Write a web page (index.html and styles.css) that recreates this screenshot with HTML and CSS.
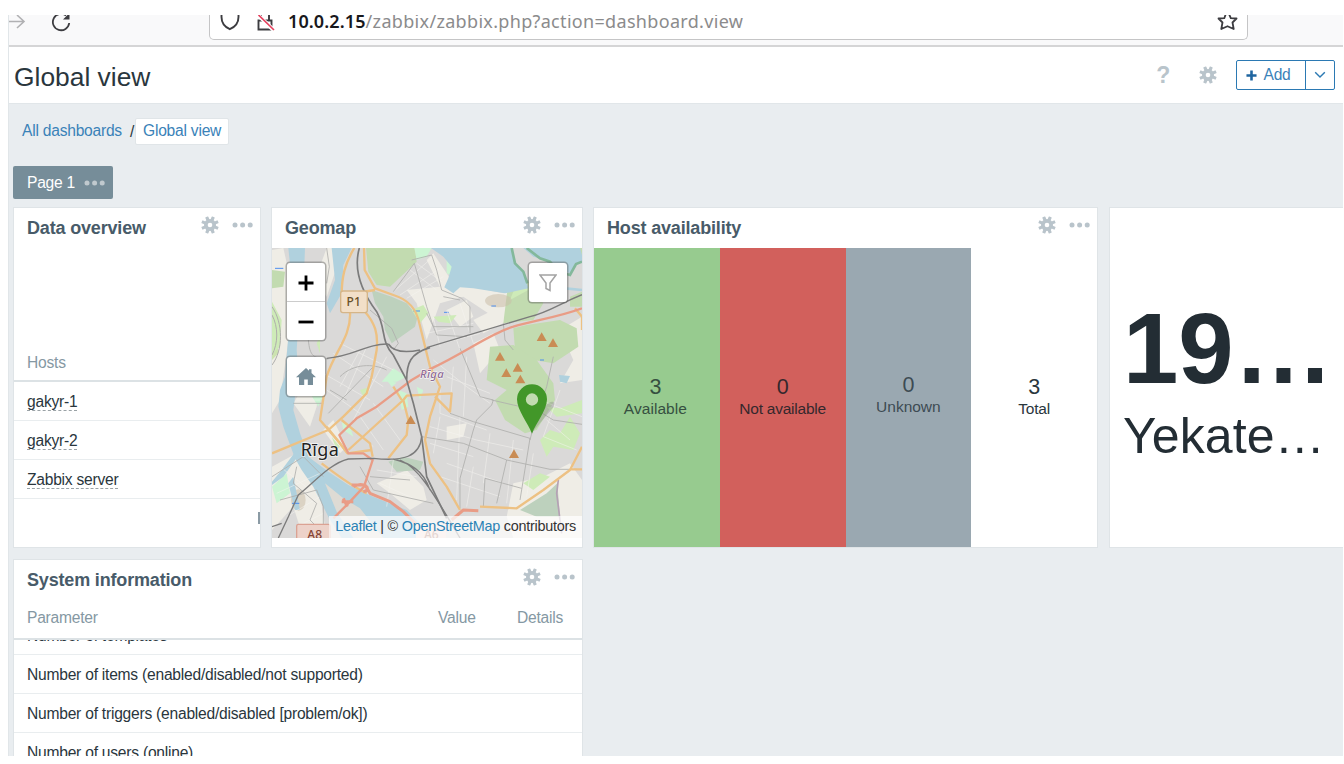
FILE: index.html
```html
<!DOCTYPE html>
<html lang="en">
<head>
<meta charset="utf-8">
<title>Global view</title>
<link rel="stylesheet" href="styles.css">
</head>
<body>
<svg class="defs" width="0" height="0">
  <symbol id="gear" viewBox="-9 -9 18 18">
    <g fill="#b9c4cb">
      <rect x="-1.6" y="-8.8" width="3.2" height="17.6" rx=".6" transform="rotate(22.5)"/>
      <rect x="-1.6" y="-8.8" width="3.2" height="17.6" rx=".6" transform="rotate(67.5)"/>
      <rect x="-1.6" y="-8.8" width="3.2" height="17.6" rx=".6" transform="rotate(112.5)"/>
      <rect x="-1.6" y="-8.8" width="3.2" height="17.6" rx=".6" transform="rotate(157.5)"/>
      <circle r="6"/>
    </g>
    <circle r="2.300" fill="#fff"/>
  </symbol>
  <symbol id="dots" viewBox="0 0 22 6">
    <circle cx="3" cy="3" r="2.500"/><circle cx="10.600" cy="3" r="2.500"/><circle cx="18.200" cy="3" r="2.500"/>
  </symbol>
</svg>
<div class="screen">
  <div class="browser">
    <svg class="nav" width="70" height="30" viewBox="0 0 70 30" fill="none">
      <path d="M0 6.500H15M9 0l7 6.500-7 6.500" stroke="#b1b1b3" stroke-width="1.600"/>
      <path d="M58 0.500A8.200 8.200 0 1 0 61.200 8" stroke="#3c3c40" stroke-width="1.800"/>
      <path d="M55 4.500h6.500V-2z" fill="#3c3c40"/>
    </svg>
    <div class="address">
      <svg width="70" height="25" viewBox="0 0 70 25" fill="none">
        <path d="M11.500-2V2C11.500 8 15 12 19.800 14.200C25 12 28.500 8 28.500 2V-2" stroke="#3c3c40" stroke-width="1.900"/>
        <path d="M48.500 5.500h13v9h-13zM51 5V0M59 5V0" stroke="#3c3c40" stroke-width="1.900"/>
        <path d="M48 0L63.500 15" stroke="#fff" stroke-width="4"/>
        <path d="M48.500 0L64 15" stroke="#e5405e" stroke-width="1.700"/>
      </svg>
      <span class="url"><span class="host">10.0.2.15</span>/zabbix/zabbix.php?action=dashboard.view</span>
      <svg class="star" width="22" height="25" viewBox="0 0 22 25" fill="none"><path d="M8.800-1L7.300 3.200L1.500 3.500L5.500 7.500L4.300 14L10.500 11.200L16.700 14L15.500 7.500L19.500 3.500L13.800 3.200L12-1" stroke="#3c3c40" stroke-width="1.800" stroke-linejoin="round"/></svg>
    </div>
  </div>
  <header class="header">
    <h1>Global view</h1>
    <div class="actions">
      <span class="help">?</span>
      <svg width="18" height="18"><use href="#gear"/></svg>
      <div class="split">
        <button class="add"><svg width="11" height="11" viewBox="0 0 12 12"><path d="M6 .500v11M.500 6h11" stroke="#1f65a0" stroke-width="2.800"/></svg>Add</button>
        <button class="more"><svg width="12" height="8" viewBox="0 0 12 8"><path d="M1.200 1.200L6 6L10.800 1.200" fill="none" stroke="#2b79b3" stroke-width="1.400"/></svg></button>
      </div>
    </div>
  </header>
  <nav class="crumbs"><a>All dashboards</a><span class="slash">/</span><a class="current">Global view</a></nav>
  <div class="tabs"><div class="tab">Page 1<svg width="22" height="6" fill="#c0c9ce"><use href="#dots"/></svg></div></div>

  <main class="grid">
    <section class="card overview">
      <div class="head"><h2>Data overview</h2><svg width="18" height="18"><use href="#gear"/></svg><svg class="dots" width="22" height="6"><use href="#dots"/></svg></div>
      <div class="hosts-head">Hosts</div>
      <div class="row"><span class="link">gakyr-1</span></div>
      <div class="row"><span class="link">gakyr-2</span></div>
      <div class="row"><span class="link">Zabbix server</span></div>
      <div class="clipped"></div>
    </section>

    <section class="card geomap">
      <div class="head"><h2>Geomap</h2><svg width="18" height="18"><use href="#gear"/></svg><svg class="dots" width="22" height="6"><use href="#dots"/></svg></div>
      <div class="map">
        <svg width="310" height="290" viewBox="36 144 930 870" fill="none">
          <rect x="36" y="144" width="930" height="870" fill="#dad9d8"/>
          <!-- open ground -->
          <g fill="#efede6">
            <path d="M36 150L70 144L105 300L84 430L60 600L36 640zM200 144H250L200 290L165 240z"/>
            <path d="M520 160L580 250L730 280L800 260L830 330L730 370L610 290L540 310L500 420L470 310L440 270L540 260L500 180z"/>
            <path d="M100 610L130 560L180 520L170 620L150 680zM560 330L620 300L640 350L600 380zM640 360L700 330L730 370L670 400z"/>
            <path d="M900 390L966 350V540L900 550L940 480zM640 430L700 400L720 450L660 520z"/>
            <path d="M36 800L110 760L180 880L200 1014H130L100 920L36 990zM350 850L440 810L490 860L500 900L450 930L390 880z"/>
            <path d="M760 850L850 830L930 790L966 840V1014H760L740 950zM190 690L220 660L260 740L240 760zM560 680L620 670L610 710L560 720z"/>
          </g>
          <!-- parks and woods -->
          <g fill="#c2dbb0">
            <path d="M318 144H465L470 185L390 260L350 255L325 215z"/>
            <path d="M760 385L800 375L900 360L950 385L955 440L880 490L820 480L765 450z"/>
            <path d="M690 440L760 435L830 480L880 550L885 600L830 690L795 700L735 660L705 600L740 570L680 540z"/>
            <path d="M745 245L805 240L850 310L820 360L730 370z"/>
            <path d="M36 210L75 215L70 260L36 265zM930 290L966 275V320L930 320zM820 144H966V170L890 160L850 180z"/>
          </g>
          <g fill="#bdd1bd">
            <path d="M335 270L395 290L440 310L473 350L465 380L395 430L375 390L370 350L345 310z"/>
            <path d="M780 930L860 880L892 850L900 950L830 950zM385 785L430 770L490 785L480 810L410 815z"/>
            <path d="M36 390L50 400L55 460L36 480z" fill="#cce3b0"/>
          </g>
          <g fill="#ceebb8">
            <path d="M455 330L490 315L505 340L480 370zM770 250L800 240L805 270L750 300zM36 305L65 360L60 440L36 460z"/>
            <path d="M840 720L870 690L900 700L930 650L960 700L940 750L880 740L860 770zM860 620L900 625L966 600V640L890 650zM790 850L840 820L870 830L820 870zM520 350L590 345L570 370L535 365z"/>
            <path d="M170 430L180 410V460zM300 570L330 560L310 590zM215 710L240 740L230 750z"/>
          </g>
          <g fill="#ccf4d3">
            <path d="M463 144H515L500 170L470 180zM400 505L440 530L410 545L365 545zM380 540L410 548L395 560zM415 570L440 580L445 620L425 630zM245 665L270 680L280 710L250 690zM36 860L80 820L90 880L50 910zM150 580L180 540L188 590L175 620z"/>
            <path d="M560 180L580 190L578 230L560 220zM470 560L490 570L480 600zM275 860L320 900L310 930L280 890zM180 850L210 870L190 880z"/>
          </g>
          <g fill="#cbbfa9" opacity=".55"><ellipse cx="715" cy="302" rx="40" ry="20"/><ellipse cx="115" cy="900" rx="22" ry="32"/></g>
          <!-- water -->
          <g fill="#b0d1de">
            <path d="M513 144H755L765 190L790 215L805 265L735 280L640 265L600 262L580 280L553 262L565 235L575 200L550 170z"/>
            <path d="M790 144H960L966 165V185L945 190L935 220L880 210L855 180L820 170z"/>
            <path d="M85 144H135L130 280L115 370L110 450L115 520L95 560L105 590L100 630L120 700L145 770L205 815L265 855L340 890L440 930L480 970L500 1014H245L205 950L160 860L125 810L105 775L70 680L55 620L60 570L75 530L84 420L100 290z"/>
            <path d="M215 144H275L250 195L245 280L210 340L200 310L225 240zM120 760L70 830L36 855V845L65 810L110 750zM100 830L120 930L105 930L85 850z"/>
            <path d="M897 525L930 528L920 550L900 545z"/>
          </g>
          <path d="M195 850L250 895L300 925L370 1014H280L230 935z" fill="#dedbd4"/>
          <path d="M755 144L765 190L790 215L802 250M800 144L840 175L870 185L895 215L930 225L948 192L966 185" stroke="#83b89b" stroke-width="8"/>
          <path d="M915 265L966 270" stroke="#b0d1de" stroke-width="8"/>
          <path d="M45 205H70M460 333H480M105 340H128M694 318H708M840 480H852M96 910H118M552 337H566" stroke="#4d8ff0" stroke-width="3"/>
          <!-- minor streets -->
          <g stroke="#f7f5f2" stroke-width="2.500" opacity=".6">
            <path d="M400 275L520 170M420 285L540 205M440 295L550 230M450 210L530 270M470 190L545 245M500 400L640 370M510 440L660 400M520 350L540 440M560 330L600 450M600 310L640 430M520 480L620 560L690 610"/>
            <path d="M540 560V640L680 690M560 530L690 580M580 500L570 620M620 470L610 650M510 680L650 720L790 750M510 730L640 770M540 650L520 760M600 650L590 900M560 790L730 850M540 830L720 890M690 700L670 850M760 720L740 910M820 760L800 890M640 800L620 920"/>
            <path d="M190 520L330 600M200 570L300 640M220 460L370 560M240 430L400 510M320 440L250 600M300 450L240 560M380 470L280 660M340 610L420 720M300 650L370 750M280 690L340 740M350 810L470 830M360 850L470 900M400 780L380 920M110 600H180M110 570L190 560M60 800L150 870M50 880L180 820M80 950L180 890M110 980L190 940M840 600L966 650M850 710L950 750M860 660L930 720M900 570L850 710"/>
          </g>
          <!-- local streets -->
          <g stroke="#afaeac" stroke-width="2.500">
            <path d="M463 190L500 320L520 380H640M463 190L400 275M455 180L515 165L530 210L545 270L605 295L630 320V400M500 340L520 380L530 405L620 410M550 290L600 300M330 330L395 385L415 430L400 450"/>
            <path d="M200 144L208 200L200 250M145 420C150 470 160 475 205 477M600 445L660 590L700 600L695 615L650 660L640 690L600 835V925M730 370L735 420L760 450M570 640L640 665L810 715L780 900M695 600L760 615L830 630L880 660L966 673M485 710L610 730L740 780L870 808L950 808M740 780L710 910M675 835L670 920M675 835L785 865M810 720L820 680L860 560L880 470"/>
            <path d="M205 640L340 500M260 600L210 570M100 610H190M240 530C280 490 340 490 380 510M36 830L130 770L190 830M110 800L100 850L170 910L150 960L190 1000M60 900L170 870L190 920V990M330 830L450 840M300 800L340 870L520 910"/>
            <path d="M36 320C70 370 70 450 36 495M36 345C55 380 55 430 36 465" stroke-width="3"/>
            <path d="M895 840L890 880L905 1000" stroke="#b5a1b5" stroke-width="5"/>
          </g>
          <!-- main roads -->
          <g stroke="#edc183" stroke-width="7" stroke-linejoin="round">
            <path d="M283 144C255 190 245 230 245 285L270 335C275 410 220 460 200 530L180 660L240 730L262 760L335 750"/>
            <path d="M312 144L314 210L345 265L400 285C450 300 470 330 478 370L510 500L540 560L510 650L495 720L510 790L560 860L600 930"/>
            <path d="M345 270L250 285M315 335C345 370 355 400 350 450L335 530L320 580L250 650L205 690L36 760M430 600L265 750M430 600L440 587L575 580L570 635L525 590M425 600L400 560M430 600L445 660L440 705L385 775M245 660L330 730L338 770M200 680L260 755M185 790C250 840 290 865 320 880M660 920L770 925L850 870L930 810L966 740M930 808H966M945 325L966 350V390"/>
          </g>
          <g stroke="#e99c86" stroke-width="7" stroke-linejoin="round">
            <path d="M966 325C900 350 830 360 760 380C700 395 620 455 515 505L455 540L350 620L290 655L238 705L265 760L310 760L338 780L312 860L265 910L220 955"/>
            <path d="M275 855L315 855L330 880L390 905L430 935L480 985M245 905H280M250 895L262 920M575 960L610 930L655 932M280 860C310 840 340 870 310 875" stroke-width="9"/>
          </g>
          <!-- railways -->
          <g stroke="#7b7b7b" stroke-width="5">
            <path d="M298 144C275 225 320 295 350 335C380 390 360 420 400 465L440 540L460 610L485 710L500 830L560 955M385 432C400 455 430 460 480 450M440 540C440 490 450 460 510 443" />
            <path d="M966 284C900 310 870 335 810 350L500 443M200 475C280 470 320 430 385 432" stroke-width="4"/>
            <path d="M485 710C480 770 430 785 340 775L265 777C210 790 160 850 115 885L85 950L55 1014M400 777C450 790 490 810 510 870M420 780C470 800 510 860 600 1014M36 980L65 970" stroke-width="4"/>
          </g>
          <!-- peaks -->
          <g fill="#c98c54">
            <path id="peak" d="M845 397l15 26h-30z"/><use href="#peak" x="34" y="18"/><use href="#peak" x="-125" y="59"/><use href="#peak" x="-72" y="92"/><use href="#peak" x="-106" y="108"/><use href="#peak" x="-64" y="127"/><use href="#peak" x="-393" y="249"/><use href="#peak" x="-83" y="351"/>
          </g>
          <g class="shield">
            <rect x="242" y="273" width="80" height="65" rx="7" fill="#f2dfc8" stroke="#d5b588" stroke-width="4"/>
            <text x="281" y="318" font-size="36" fill="#685027">P1</text>
            <rect x="110" y="973" width="100" height="60" rx="5" fill="#edd2c9" stroke="#dba293" stroke-width="4"/>
            <text x="164" y="1018" font-size="36" fill="#834334">A8</text>
            <rect x="468" y="971" width="90" height="60" rx="5" fill="#efd9d2"/>
            <text x="514" y="1018" font-size="36" fill="#9c6b5f">A6</text>
          </g>
          <text class="station" x="516" y="533">Rīga</text>
          <text class="city" x="180" y="768">Rīga</text>
          <path d="M816 698L880 622C890 600 870 600 855 620z" fill="#777" opacity=".3"/>
          <path d="M816 701C804 670 771 630 771 598A45 45 0 0 1 861 598C861 630 828 670 816 701zM816 580A18 18 0 1 0 816 617A18 18 0 1 0 816 580z" fill="#429729" fill-rule="evenodd"/>
        </svg>
        <div class="zoom"><div class="zoom-btn"><svg width="16" height="16"><path d="M8 .500v15M.500 8h15" stroke="#000" stroke-width="2.800"/></svg></div><div class="zoom-btn"><svg width="16" height="16"><path d="M.500 8h15" stroke="#000" stroke-width="2.800"/></svg></div></div>
        <div class="tool home"><svg width="20" height="18" viewBox="0 0 20 18"><path d="M10 0L0 9.200H3V17H8.200V11.500H11.800V17H17V9.200H20L15.500 5V1.200H13V2.800z" fill="#768d99"/></svg></div>
        <div class="tool filter"><svg width="18" height="18" viewBox="0 0 18 18"><path d="M1 1H17L11 9V16.500L7 14.500V9z" fill="none" stroke="#a3a3a3" stroke-width="1.500"/></svg></div>
        <div class="credit"><a>Leaflet</a> | © <a>OpenStreetMap</a> contributors</div>
      </div>
    </section>

    <section class="card hostav">
      <div class="head"><h2>Host availability</h2><svg width="18" height="18"><use href="#gear"/></svg><svg class="dots" width="22" height="6"><use href="#dots"/></svg></div>
      <div class="cells">
        <div class="cell up"><b>3</b><span>Available</span></div>
        <div class="cell down"><b>0</b><span>Not available</span></div>
        <div class="cell unknown"><b>0</b><span>Unknown</span></div>
        <div class="cell"><b>3</b><span>Total</span></div>
      </div>
    </section>

    <section class="card clock">
      <div class="time">19…</div>
      <div class="zone">Yekate…</div>
    </section>

    <section class="card sysinfo">
      <div class="head"><h2>System information</h2><svg width="18" height="18"><use href="#gear"/></svg><svg class="dots" width="22" height="6"><use href="#dots"/></svg></div>
      <div class="cols"><span>Parameter</span><span>Value</span><span>Details</span></div>
      <div class="scroller">
        <div class="row">Number of templates</div>
        <div class="row">Number of items (enabled/disabled/not supported)</div>
        <div class="row">Number of triggers (enabled/disabled [problem/ok])</div>
        <div class="row">Number of users (online)</div>
      </div>
    </section>
  </main>
</div>
</body>
</html>
```
FILE: styles.css
```css
* { box-sizing: border-box; }
body { margin: 0; height: 764px; overflow: hidden; background: #fff; font-family: "Liberation Sans", Arial, sans-serif; font-size: 15.600px; letter-spacing: -.230px; line-height: 18px; color: #2a363d; }
svg { display: block; flex: none; }
.defs { position: absolute; }
h1, h2 { margin: 0; }
a { color: #3a82b8; }
button { font: inherit; letter-spacing: inherit; border: 0; background: none; padding: 0; color: #3a82b8; }

.screen { margin: 15px 0 0 8px; width: 1335px; height: 741px; overflow: hidden; background: #e9edf0; border-left: 1px solid #e1e6e9; }

.browser { height: 32px; margin-left: -1px; display: flex; background: #f9f9fa; border-bottom: 2px solid #d5d5d6; overflow: hidden; }
.nav { margin-right: 131px; }
.address { height: 25px; width: 1039px; display: flex; background: #fff; border: solid #c5c5c6; border-width: 0 1px 1px; border-radius: 0 0 5px 5px; }
.url { margin-left: 8px; margin-top: -6px; font: 18px/24px "Noto Sans", sans-serif; letter-spacing: .320px; color: #8b8b8c; white-space: nowrap; }
.host { color: #18181c; font-weight: 600; letter-spacing: .100px; }
.star { margin: 0 8px 0 auto; }

.header { height: 57px; padding: 0 8px 0 5px; display: flex; align-items: center; justify-content: space-between; background: #fff; border-bottom: 1px solid #e1e6e9; }
h1 { font-size: 26.400px; line-height: 32px; font-weight: 400; letter-spacing: 0; padding-top: 3px; }
.actions { display: flex; align-items: center; }
.help { font-size: 23px; font-weight: 700; color: #b9c4cb; margin-right: 29px; }
.split { margin-left: 19px; display: flex; height: 30px; border: 1.500px solid #2b79b3; border-radius: 2px; }
.add { width: 69px; padding-right: 5px; display: flex; align-items: center; justify-content: center; gap: 6px; border-right: 1px solid #2b79b3; }
.more { width: 28px; display: flex; align-items: center; justify-content: center; }

.crumbs { height: 54px; padding: 0 0 0 13px; display: flex; align-items: center; }
.slash { margin: 1px 1px 0 8px; }
.current { height: 27px; padding: 3px 7px; background: #fff; border: 1px solid #e0e5e8; border-radius: 2px; }
.tabs { height: 49px; padding: 8px 0 0 4px; }
.tab { width: 100px; height: 33px; padding: 0 0 0 14px; display: flex; align-items: center; gap: 9px; background: #768d99; border-radius: 2px; color: #fff; }

.grid { width: 1340px; padding-left: 4px; display: grid; grid-template-columns: 248px 312px 505px 240px; grid-template-rows: 341px 340px; row-gap: 11px; column-gap: 10px; }
.card { background: #fff; border: 1px solid #dfe4e7; overflow: hidden; min-width: 0; }
.head { height: 40px; padding: 0 6px 6px 13px; display: flex; align-items: center; }
h2 { font-size: 18px; letter-spacing: -.170px; line-height: 20px; font-weight: 700; color: #485b69; margin: 6px auto 0 0; }
.dots { margin-left: 13px; fill: #b9c4cb; }

.hosts-head { height: 134px; padding: 0 13px 8px; display: flex; align-items: flex-end; color: #8598a3; border-bottom: 2px solid #dce2e5; }
.row { height: 39px; padding: 11px 13px 0; border-bottom: 1px solid #e9edef; white-space: nowrap; }
.link { display: inline-block; height: 18px; border-bottom: 1px dashed #9aa2a6; }
.clipped { width: 2px; height: 12px; margin: 13px 0 0 auto; background: #8b9ba5; }

.map { position: relative; height: 290px; overflow: hidden; }
.shield { font-family: "Noto Sans", sans-serif; text-anchor: middle; font-weight: 500; letter-spacing: 0; }
.station { font: italic 500 34px "Noto Sans", sans-serif; letter-spacing: 1px; fill: #8d6b96; text-anchor: middle; stroke: #fff; stroke-width: 3px; paint-order: stroke; }
.city { font: 54px "Noto Sans", sans-serif; letter-spacing: 1px; fill: #222; text-anchor: middle; stroke: #fff; stroke-opacity: .7; stroke-width: 5px; paint-order: stroke; }
.zoom { position: absolute; left: 15px; top: 15px; width: 38px; background: #fff; border-radius: 3px; box-shadow: 0 0 0 1.500px rgba(90,90,90,.45); }
.zoom-btn { height: 38px; padding-top: 2px; display: flex; align-items: center; justify-content: center; }
.zoom-btn + .zoom-btn { height: 39px; border-top: 1px solid #ccc; }
.tool { position: absolute; width: 38px; height: 39px; display: flex; align-items: center; justify-content: center; background: #fff; border-radius: 3px; box-shadow: 0 0 0 1.500px rgba(90,90,90,.45); }
.home { left: 15px; top: 109px; }
.filter { right: 15px; top: 15px; }
.credit { position: absolute; right: 0; bottom: 0; height: 22px; padding: 1px 6px 0; background: rgba(255,255,255,.72); font-size: 14.400px; letter-spacing: -.250px; white-space: nowrap; color: #333; }
.credit a { color: #2b82b5; }

.cells { height: 299px; display: grid; grid-template-columns: repeat(4, 1fr); }
.cell { display: flex; flex-direction: column; align-items: center; justify-content: center; padding-bottom: 1px; }
.cell b { font-weight: 400; font-size: 21.500px; line-height: 23px; }
.cell span { font-size: 15.500px; line-height: 20px; }
.up { background: #97cb8f; padding-right: 3px; padding-bottom: 0; color: #365041; }
.up span { letter-spacing: .050px; }
.down { background: #d2605c; color: #35282d; }
.unknown { background: #9aa8b1; padding-bottom: 4px; color: #3d4b53; }
.unknown span { letter-spacing: 0; }

.clock { margin-left: 1px; padding: 84px 0 0 13px; white-space: nowrap; letter-spacing: 0; color: #232d34; }
.time { font-size: 99.500px; line-height: 114px; font-weight: 700; }
.zone { font-size: 50px; line-height: 60px; letter-spacing: .100px; }

.sysinfo { grid-column: 1 / 3; }
.cols { height: 40px; padding: 9px 18px 0 13px; display: grid; grid-template-columns: 411px 79px auto; color: #8598a3; border-bottom: 2px solid #dce2e5; }
.scroller { overflow: hidden; }
.scroller .row:first-child { margin-top: -24px; }
```
